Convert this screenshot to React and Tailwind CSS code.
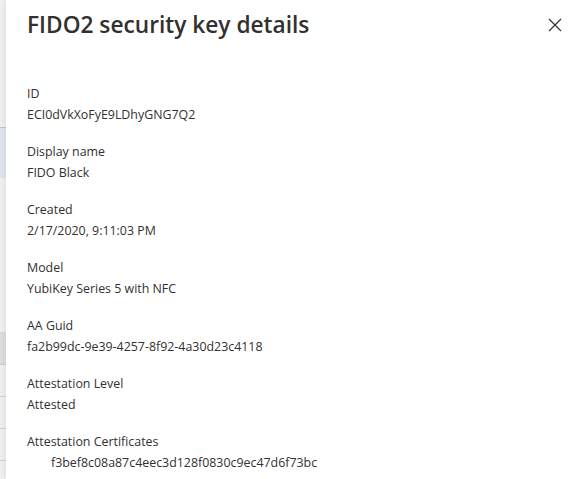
const fields = [
    { label: "ID", value: "ECI0dVkXoFyE9LDhyGNG7Q2" },
    { label: "Display name", value: "FIDO Black" },
    { label: "Created", value: "2/17/2020, 9:11:03 PM" },
    { label: "Model", value: "YubiKey Series 5 with NFC" },
    { label: "AA Guid", value: "fa2b99dc-9e39-4257-8f92-4a30d23c4118" },
    { label: "Attestation Level", value: "Attested" },
];

function App() {
    return (
        <div className="h-[479px] w-[587px] flex overflow-hidden bg-white" style={{ fontFamily: '"Open Sans", "Noto Sans", sans-serif' }}>
            {/* page behind the panel */}
            <div className="w-[6px] shrink-0 flex flex-col bg-[#f3f3f3]">
                <div className="h-[128px] border-b border-[#c8c8c8]"></div>
                <div className="h-[50px] bg-[#e4e8f3]"></div>
                <div className="h-[155px] border-b border-[#dcdcdc]"></div>
                <div className="h-[32px] bg-[#e1e1e1] border-b border-[#d0d0d0]"></div>
                <div className="h-[32px] border-b border-[#d8d8d8]"></div>
                <div className="h-[32px] border-b border-[#d8d8d8]"></div>
                <div className="h-[32px] border-b border-[#d8d8d8]"></div>
            </div>

            <div className="flex-1 relative shadow-[-4px_0_6px_rgba(0,0,0,0.06)] text-[#323130]">
                <div className="flex justify-between items-start pl-[21px] pr-[25px] pt-[7px]">
                    <h1 className="text-[22.7px] leading-[36px] font-semibold">FIDO2 security key details</h1>
                    <button className="mt-[11px] text-[#323130]">
                        <svg width="14" height="14" viewBox="0 0 14 14" fill="none" stroke="currentColor" strokeWidth="1.2">
                            <path d="M1 1L13 13M13 1L1 13" />
                        </svg>
                    </button>
                </div>

                <div className="pl-[21px] pt-[42px] flex flex-col gap-[19px] text-[12.4px]">
                    {fields.map((f) => (
                        <div key={f.label} className="flex flex-col gap-[3px]">
                            <div className="leading-[18px]">{f.label}</div>
                            <div className="leading-[18px]">{f.value}</div>
                        </div>
                    ))}
                    <div className="flex flex-col gap-[3px]">
                        <div className="leading-[18px]">Attestation Certificates</div>
                        <div className="leading-[18px] pl-[24px]">f3bef8c08a87c4eec3d128f0830c9ec47d6f73bc</div>
                    </div>
                </div>
            </div>
        </div>
    );
}

export default App;
